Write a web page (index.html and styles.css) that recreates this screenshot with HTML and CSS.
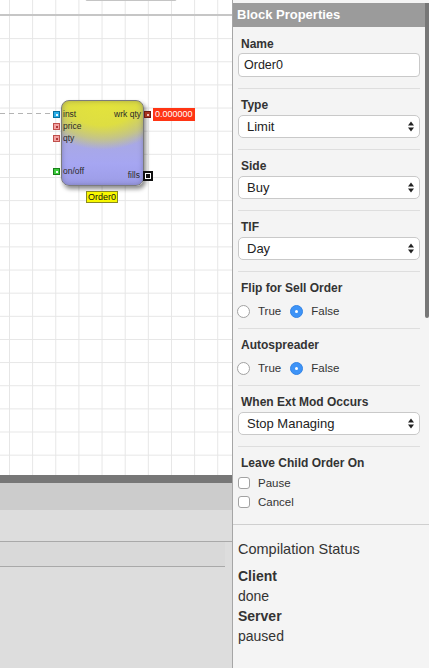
FILE: index.html
```html
<!DOCTYPE html>
<html>
<head>
<meta charset="utf-8">
<title>Block Properties</title>
<link rel="stylesheet" href="styles.css">
</head>
<body>
<div class="app">
  <div class="workspace">
    <div class="canvas">
      <div class="toolbox"></div>
      <div class="ruler"></div>
      <div class="wire"></div>
      <div class="node">
        <span class="port port-inst" style="top:10px"></span>
        <span class="port port-num" style="top:22px"></span>
        <span class="port port-num" style="top:34px"></span>
        <span class="port port-bool" style="top:67px"></span>
        <span class="port-label" style="top:8px">inst</span>
        <span class="port-label" style="top:20px">price</span>
        <span class="port-label" style="top:32px">qty</span>
        <span class="port-label" style="top:65px">on/off</span>
        <span class="port port-out"></span>
        <span class="port port-fills"></span>
        <span class="port-label out" style="top:8px">wrk qty</span>
        <span class="port-label out fills-label" style="top:69px">fills</span>
      </div>
      <div class="value-tag">0.000000</div>
      <div class="name-tag">Order0</div>
    </div>
    <div class="splitter"></div>
    <div class="tabbar"></div>
    <div class="pane">
      <div class="pane-head"></div>
      <div class="pane-row"></div>
    </div>
  </div>

  <aside class="panel">
    <div class="scroll-thumb"></div>
    <div class="panel-header">Block Properties</div>
    <div class="form">
      <div class="field field-first">
        <label class="field-label">Name</label>
        <input class="text-input" type="text" value="Order0">
      </div>
      <div class="field">
        <label class="field-label">Type</label>
        <div class="select"><span>Limit</span><svg class="arrows" width="6" height="11" viewBox="0 0 6 11"><path d="M0 4.5L3 0.5L6 4.5Z M0 6.5L3 10.5L6 6.5Z" fill="#222"/></svg></div>
      </div>
      <div class="field">
        <label class="field-label">Side</label>
        <div class="select"><span>Buy</span><svg class="arrows" width="6" height="11" viewBox="0 0 6 11"><path d="M0 4.5L3 0.5L6 4.5Z M0 6.5L3 10.5L6 6.5Z" fill="#222"/></svg></div>
      </div>
      <div class="field">
        <label class="field-label">TIF</label>
        <div class="select"><span>Day</span><svg class="arrows" width="6" height="11" viewBox="0 0 6 11"><path d="M0 4.5L3 0.5L6 4.5Z M0 6.5L3 10.5L6 6.5Z" fill="#222"/></svg></div>
      </div>
      <div class="field field-radio">
        <label class="field-label">Flip for Sell Order</label>
        <div class="radio-row">
          <span class="radio"></span><span class="opt">True</span>
          <span class="radio checked"></span><span class="opt">False</span>
        </div>
      </div>
      <div class="field field-radio">
        <label class="field-label">Autospreader</label>
        <div class="radio-row">
          <span class="radio"></span><span class="opt">True</span>
          <span class="radio checked"></span><span class="opt">False</span>
        </div>
      </div>
      <div class="field">
        <label class="field-label">When Ext Mod Occurs</label>
        <div class="select"><span>Stop Managing</span><svg class="arrows" width="6" height="11" viewBox="0 0 6 11"><path d="M0 4.5L3 0.5L6 4.5Z M0 6.5L3 10.5L6 6.5Z" fill="#222"/></svg></div>
      </div>
      <div class="field field-last">
        <label class="field-label">Leave Child Order On</label>
        <div class="check-row"><span class="checkbox"></span><span class="opt">Pause</span></div>
        <div class="check-row"><span class="checkbox"></span><span class="opt">Cancel</span></div>
      </div>
    </div>
    <div class="status">
      <div class="status-title">Compilation Status</div>
      <div class="status-key">Client</div>
      <div class="status-val">done</div>
      <div class="status-key">Server</div>
      <div class="status-val">paused</div>
    </div>
  </aside>
</div>
</body>
</html>
```

FILE: styles.css
```css
* { box-sizing: border-box; }
html, body { margin: 0; padding: 0; }
body {
  font-family: "Liberation Sans", Arial, sans-serif;
  color: #333;
  background: #ddd;
}
.app {
  display: flex;
  width: 429px;
  height: 668px;
  overflow: hidden;
}

/* ---------- left workspace ---------- */
.workspace {
  width: 232px;
  flex: none;
  display: flex;
  flex-direction: column;
}
.canvas {
  position: relative;
  height: 475px;
  flex: none;
  overflow: hidden;
  background-color: #fff;
  background-image:
    linear-gradient(to right, #e6e6e6 1px, transparent 1px),
    linear-gradient(to bottom, #e6e6e6 1px, transparent 1px);
  background-size: 23.15px 23.15px;
  background-position: 9px 15px;
}
.toolbox {
  position: absolute;
  left: 85px;
  top: -20px;
  width: 92px;
  height: 21px;
  background: #fff;
  border: 1px solid #c4c4c4;
  border-radius: 2px;
}
.ruler {
  margin-top: 14px;
  height: 2px;
  background: #c6c6c6;
}
.wire {
  position: absolute;
  left: 0;
  top: 113px;
  width: 52px;
  height: 1px;
  background: repeating-linear-gradient(to right, #b4b4b4 0 5px, transparent 5px 9px);
}
.node {
  position: absolute;
  left: 61px;
  top: 100px;
  width: 83px;
  height: 86px;
  border: 1px solid #7c7c7c;
  border-radius: 8px;
  background:
    radial-gradient(ellipse 85% 58% at 50% 0%, #e4e43a 0%, #dede42 50%, rgba(214,214,80,0.6) 78%, rgba(214,214,90,0) 100%),
    linear-gradient(to bottom, #bcbc80 0%, #a9a9e2 44%, #a6a6f2 75%, #9c9ce6 100%);
  box-shadow: inset 0 0 5px rgba(60,60,90,0.35), 2px 3px 4px rgba(0,0,0,0.45);
}
.port {
  position: absolute;
  width: 7px;
  height: 7px;
  left: -9px;
}
.port::after {
  content: "";
  position: absolute;
  left: 2px;
  top: 2px;
  width: 2px;
  height: 2px;
}
.port-inst { background: #2aaee8; border: 1px solid #0b6f9e; }
.port-inst::after { background: #e8f6ff; }
.port-num { background: #f2a2a2; border: 1px solid #c0504c; }
.port-num::after { background: #b03a3a; }
.port-bool { background: #3ccc3c; border: 1px solid #1a801a; }
.port-bool::after { background: #f0fff0; }
.port-out {
  left: 82px;
  top: 10px;
  background: #a83422;
  border: 1px solid #6e1a10;
}
.port-out::after { background: #f2c4b8; }
.port-fills {
  left: 81px;
  top: 70px;
  width: 10px;
  height: 10px;
  background: #fff;
  border: 2px solid #111;
}
.port-fills::after {
  left: 1px;
  top: 1px;
  width: 4px;
  height: 4px;
  background: #111;
}
.port-label {
  position: absolute;
  left: 1px;
  font-size: 8.5px;
  line-height: 10px;
  color: #2a2a2a;
  white-space: nowrap;
}
.port-label.out {
  left: auto;
  right: 2px;
}
.port-label.fills-label { right: 3px; }
.value-tag {
  position: absolute;
  left: 153px;
  top: 108px;
  height: 13px;
  padding: 0 2px;
  background: #ff3514;
  color: #fff;
  font-size: 9px;
  line-height: 13px;
}
.name-tag {
  position: absolute;
  left: 86px;
  top: 191px;
  padding: 0 1px;
  background: #f8f800;
  border: 1px solid #8a8a20;
  color: #111;
  font-size: 9px;
  line-height: 10px;
}
.splitter {
  height: 8px;
  flex: none;
  background: #777;
}
.tabbar {
  height: 27px;
  flex: none;
  background: #ccc;
}
.pane {
  flex: 1;
  background: #ddd;
}
.pane-head {
  height: 32px;
  border-bottom: 1px solid #a9a9a9;
}
.pane-row {
  width: 225px;
  height: 25px;
  background: #d9d9d9;
  border-bottom: 1px solid #a9a9a9;
}

/* ---------- properties panel ---------- */
.panel {
  position: relative;
  width: 197px;
  flex: none;
  background: #f4f4f4;
  border-left: 1px solid #a6a6a6;
  padding-top: 3px;
}
.scroll-thumb {
  position: absolute;
  right: 0;
  top: 3px;
  width: 4px;
  height: 315px;
  background: #777;
  border-radius: 0 0 2px 2px;
}
.panel-header {
  height: 24px;
  padding-left: 4px;
  background: #9b9b9b;
  color: #fff;
  font-weight: bold;
  font-size: 13px;
  line-height: 24px;
}
.form {
  padding: 0 9px 0 5px;
  border-bottom: 1px solid #cfcfcf;
}
.field {
  padding: 9px 0 11px;
  border-bottom: 1px solid #dedede;
}
.field-first { padding-top: 10px; }
.field-radio { padding-bottom: 8px; }
.field-last { border-bottom: 0; padding-bottom: 13px; }
.field-label {
  display: block;
  padding-left: 3px;
  margin-bottom: 3px;
  font-weight: bold;
  font-size: 12px;
  line-height: 14px;
  color: #333;
}
.field-first .field-label { margin-bottom: 2px; }
.text-input {
  display: block;
  width: 100%;
  height: 24px;
  margin: 0;
  padding: 0 5px;
  border: 1px solid #c9c9c9;
  border-radius: 4px;
  background: #fff;
  font-family: "Liberation Sans", Arial, sans-serif;
  font-size: 12.5px;
  color: #222;
  outline: none;
}
.select {
  display: flex;
  align-items: center;
  justify-content: space-between;
  height: 23px;
  padding: 0 5px 0 8px;
  border: 1px solid #c9c9c9;
  border-radius: 5px;
  background: #fff;
  font-size: 13px;
  color: #222;
}
.arrows { display: block; }
.radio-row {
  display: flex;
  align-items: center;
  height: 18px;
  margin-top: 7px;
  margin-left: -1px;
}
.radio {
  width: 13px;
  height: 13px;
  flex: none;
  border-radius: 50%;
  border: 1px solid #a2a2a2;
  background: #fff;
  position: relative;
}
.radio.checked {
  margin-left: 9px;
  background: #3d93f7;
  border-color: #3384e6;
}
.radio.checked::after {
  content: "";
  position: absolute;
  left: 4px;
  top: 4px;
  width: 3px;
  height: 3px;
  border-radius: 50%;
  background: #fff;
}
.opt {
  margin-left: 8px;
  font-size: 11.5px;
  color: #333;
}
.check-row {
  display: flex;
  align-items: center;
  height: 19px;
}
.checkbox {
  width: 12px;
  height: 12px;
  flex: none;
  border: 1px solid #a2a2a2;
  border-radius: 3px;
  background: #fff;
}
.status {
  padding: 15px 6px 0 5px;
  color: #333;
}
.status-title {
  font-size: 14.5px;
  line-height: 18px;
  margin-bottom: 8px;
}
.status-key {
  font-weight: bold;
  font-size: 14px;
  line-height: 20px;
}
.status-val {
  font-size: 14px;
  line-height: 20px;
}
```
